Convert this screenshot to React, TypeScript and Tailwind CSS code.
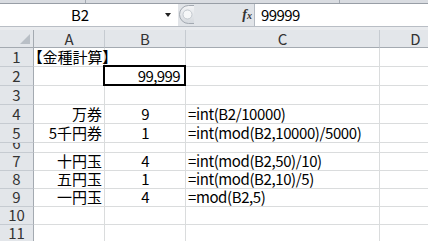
import React from "react";

type Row = {
  n: number;
  h: string;
  a?: string;
  b?: string;
  c?: string;
  bRight?: boolean;
  selected?: boolean;
  short?: boolean;
};

const rows: Row[] = [
  { n: 1, h: "h-[19px]", a: "【金種計算】" },
  { n: 2, h: "h-[19px]", b: "99,999", bRight: true, selected: true },
  { n: 3, h: "h-[19px]" },
  { n: 4, h: "h-[19px]", a: "万券", b: "9", c: "=int(B2/10000)" },
  { n: 5, h: "h-[19px]", a: "5千円券", b: "1", c: "=int(mod(B2,10000)/5000)" },
  { n: 6, h: "h-[10px]", short: true },
  { n: 7, h: "h-[18px]", a: "十円玉", b: "4", c: "=int(mod(B2,50)/10)" },
  { n: 8, h: "h-[18px]", a: "五円玉", b: "1", c: "=int(mod(B2,10)/5)" },
  { n: 9, h: "h-[18px]", a: "一円玉", b: "4", c: "=mod(B2,5)" },
  { n: 10, h: "h-[18px]" },
  { n: 11, h: "h-[18px]" },
];

const cols = ["A", "B", "C", "D"];

function Splitter() {
  return (
    <svg width="16" height="21" viewBox="0 0 16 21" className="shrink-0">
      <defs>
        <linearGradient id="pill" x1="0" y1="0" x2="0" y2="1">
          <stop offset="0" stopColor="#f3f4f6" />
          <stop offset="1" stopColor="#d5d9de" />
        </linearGradient>
      </defs>
      <path
        d="M16 1.5 H10.5 A9 9 0 0 0 10.5 19.5 H16"
        fill="url(#pill)"
        stroke="#a3a9b1"
      />
      <circle cx="9.5" cy="10.5" r="4.5" fill="#f6f7f8" stroke="#c3c8ce" />
    </svg>
  );
}

export default function App() {
  return (
    <div className="w-[428px] h-[241px] overflow-hidden bg-white font-['Noto_Sans_CJK_JP','Noto_Sans_CJK_SC',sans-serif] text-black">
      {/* ribbon edge */}
      <div className="flex h-[4px] bg-[#d9dce1] border-b border-[#989ea6]">
        <div className="w-[86px] border-r border-[#a4aab2]" />
        <div className="w-[254px] border-r border-[#a4aab2]" />
        <div className="flex-1" />
      </div>

      {/* formula bar */}
      <div className="flex h-[22px] bg-[#e1e4e8]">
        <div className="flex w-[178px] items-center bg-white">
          <span className="w-[160px] text-center text-[15px] leading-[20px]">B2</span>
          <span className="ml-[5px] h-0 w-0 border-x-[3.5px] border-t-[4px] border-x-transparent border-t-[#222]" />
        </div>
        <Splitter />
        <div className="flex flex-1 items-center justify-end pr-[2px]">
          <span className="font-['Liberation_Serif',serif] italic font-bold text-[14px] leading-[16px] text-[#333]">
            f<span className="text-[10px]">x</span>
          </span>
        </div>
        <div className="flex w-[174px] items-center border-l border-[#b4bac2] bg-white pl-[6px]">
          <span className="text-[15px] leading-[20px] tracking-[-0.6px]">99999</span>
        </div>
      </div>
      <div className="h-[1px] bg-[#b9bec5]" />
      <div className="h-[3px] bg-[#e9ebee]" />

      {/* sheet */}
      <div className="grid grid-cols-[34px_71px_81px_194px_72px]">
        {/* column headers */}
        <div className="relative h-[18px] border-r border-b border-[#a4aab1] bg-[#e3e6ea]">
          <svg width="10" height="10" className="absolute right-[3px] bottom-[3px]">
            <path d="M10 0 L10 10 L0 10 Z" fill="#b9bfc6" />
          </svg>
        </div>
        {cols.map((c) => (
          <div
            key={c}
            className="flex h-[18px] items-end justify-center border-r border-b border-r-[#c6cbd1] border-b-[#a4aab1] bg-[#e3e6ea] text-[15px] leading-[16px] text-[#333]"
          >
            {c}
          </div>
        ))}

        {rows.map((r) => (
          <React.Fragment key={r.n}>
            <div
              className={`${r.h} ${r.short ? "overflow-hidden" : ""} flex items-end justify-center border-r border-b border-r-[#a4aab1] border-b-[#c6cbd1] bg-[#e3e6ea] pb-[1px] text-[15px] leading-[16px] text-[#333]`}
            >
              <span>{r.n}</span>
            </div>
            <div
              className={`${r.h} relative flex items-end justify-end border-r border-b border-[#dadcdd] pb-[1px] pr-[2px] text-[15px] leading-[16px]`}
            >
              {r.n === 1 ? (
                <span className="absolute left-[1px] bottom-[1px] whitespace-nowrap [font-feature-settings:'palt']">
                  {r.a}
                </span>
              ) : (
                <span className="whitespace-nowrap">{r.a}</span>
              )}
            </div>
            <div
              className={`${r.h} relative flex items-end ${r.bRight ? "justify-end pr-[5px]" : "justify-center"} border-r border-b border-[#dadcdd] pb-[1px] text-[15px] leading-[16px]`}
            >
              <span className="tracking-[-0.6px]">{r.b}</span>
              {r.selected && (
                <span className="absolute -left-[2px] -top-[2px] -right-[1px] -bottom-[1px] border-2 border-black" />
              )}
            </div>
            <div
              className={`${r.h} flex items-end border-r border-b border-[#dadcdd] pb-[1px] pl-[2px] text-[15px] leading-[16px]`}
            >
              <span className="whitespace-nowrap tracking-[-0.4px]">{r.c}</span>
            </div>
            <div className={`${r.h} border-r border-b border-[#dadcdd]`} />
          </React.Fragment>
        ))}
      </div>
    </div>
  );
}
